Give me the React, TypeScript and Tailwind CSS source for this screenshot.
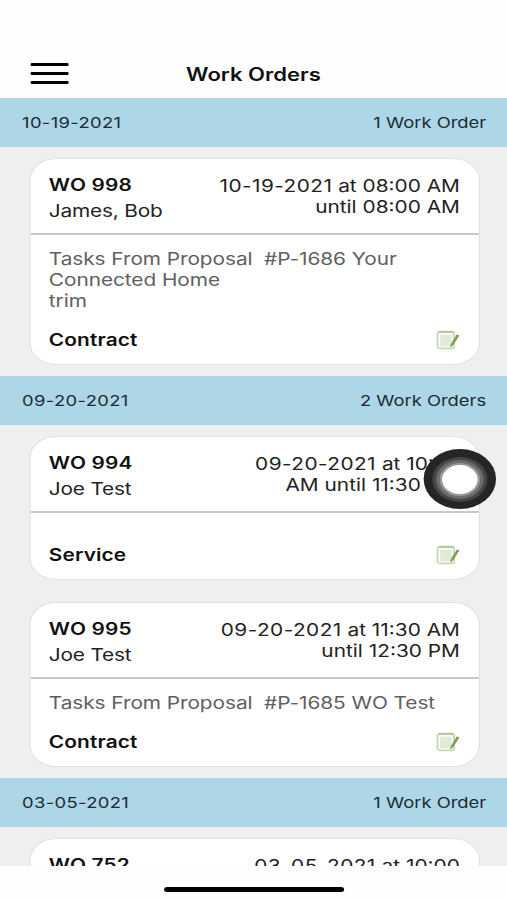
type WorkOrder = {
  id: number;
  customer: string;
  schedule: string[];
  tasks: string[];
  type: string;
};

type Day = {
  date: string;
  count: string;
  orders: WorkOrder[];
};

const days: Day[] = [
  {
    date: '10-19-2021',
    count: '1 Work Order',
    orders: [
      {
        id: 998,
        customer: 'James, Bob',
        schedule: [' at 08:00 AM', 'until 08:00 AM'],
        tasks: ['Tasks From Proposal  #P-1686 Your', 'Connected Home', 'trim'],
        type: 'Contract',
      },
    ],
  },
  {
    date: '09-20-2021',
    count: '2 Work Orders',
    orders: [
      {
        id: 994,
        customer: 'Joe Test',
        schedule: [' at 10:30', 'AM until 11:30 AM'],
        tasks: [],
        type: 'Service',
      },
      {
        id: 995,
        customer: 'Joe Test',
        schedule: [' at 11:30 AM', 'until 12:30 PM'],
        tasks: ['Tasks From Proposal  #P-1685 WO Test'],
        type: 'Contract',
      },
    ],
  },
  {
    date: '03-05-2021',
    count: '1 Work Order',
    orders: [
      {
        id: 752,
        customer: 'Joe Test',
        schedule: [' at 10:00'],
        tasks: [],
        type: '',
      },
    ],
  },
];

function NoteIcon() {
  return (
    <svg className="h-5 w-5" viewBox="0 0 20 20" fill="none">
      <rect x="1.2" y="1.5" width="13.6" height="17" rx="2" fill="#f8fbf4" stroke="#c3d3ad" strokeWidth="1.3" />
      <path d="M2.2 2h11.8" stroke="#a9bf8c" strokeWidth="1.5" />
      <rect x="3.4" y="4.8" width="9.4" height="11.6" fill="#e1ead6" />
      <path d="M12 16.8l.6-2.8L17.2 4.8l1.5.9-4.8 9.1z" fill="#7d9c52" stroke="#7d9c52" strokeWidth=".8" />
    </svg>
  );
}

function WorkOrderCard({ date, order }: { date: string; order: WorkOrder }) {
  const [start, ...rest] = order.schedule;

  return (
    <div className="overflow-hidden rounded-[22px] border border-[#e2e2e2] bg-white">
      <div className="flex h-[76px] justify-between border-b-2 border-[#c8c8c8] pt-[15px] pr-[15px] pl-[15.4px] text-[#222]">
        <div>
          <div className="text-[17px] leading-[22px] font-semibold tracking-[0.15px] text-[#111]">WO {order.id}</div>
          <div className="mt-1 text-[17px] leading-[22px] tracking-[-0.15px]">{order.customer}</div>
        </div>
        <div className="pt-[1.5px] text-right text-[17px] leading-[21px]">
          <div className="whitespace-pre">
            <span className="tracking-[0.35px]">{date}</span>
            {start}
          </div>
          {rest.map((line) => (
            <div key={line}>{line}</div>
          ))}
        </div>
      </div>
      <div className="pt-[13.5px] pr-[15px] pb-[13.5px] pl-[15.4px]">
        <div className="text-[17px] leading-[21px] tracking-[-0.05px] text-[#606060]">
          {order.tasks.map((line) => (
            <div key={line} className="whitespace-pre">{line}</div>
          ))}
        </div>
        <div className="mt-[17px] flex h-[22px] items-center justify-between">
          <span className="text-[17px] leading-[22px] font-semibold tracking-[0.1px] text-[#111]">{order.type}</span>
          <NoteIcon />
        </div>
      </div>
    </div>
  );
}

function DaySection({ day }: { day: Day }) {
  return (
    <section>
      <div className="flex h-[49px] items-center justify-between bg-[#add6e6] pt-[2px] pr-[17px] pl-[18px] text-[15px] text-[#1c2b33]">
        <span className="tracking-[0.3px]">{day.date}</span>
        <span>{day.count}</span>
      </div>
      <div className="flex flex-col gap-[22px] pt-[11px] pr-[22.5px] pb-[11px] pl-[23.5px]">
        {day.orders.map((order) => (
          <WorkOrderCard key={order.id} date={day.date} order={order} />
        ))}
      </div>
    </section>
  );
}

// The 414pt wide phone layout is stretched to fill the 507px frame
export default function App() {
  return (
    <div className="h-[900px] w-[507px] overflow-hidden bg-white">
      <div
        className="relative flex h-[900px] w-[414px] origin-left scale-x-[1.2246] flex-col bg-[#fefefe]"
        style={{ fontFamily: 'Inter, "Liberation Sans", sans-serif' }}
      >
        <header className="grid h-[98px] shrink-0 grid-cols-[1fr_auto_1fr] items-end px-[25px] pb-[12.5px]">
          <div className="flex h-[23px] w-[31px] flex-col gap-[6px]">
            <span className="h-[3px] rounded-[1px] bg-black" />
            <span className="h-[3px] rounded-[1px] bg-black" />
            <span className="h-[3px] rounded-[1px] bg-black" />
          </div>
          <h1 className="text-[18px] leading-[22px] font-semibold text-[#111]">Work Orders</h1>
        </header>

        <main className="h-[768px] shrink-0 overflow-hidden bg-[#efefef]">
          {days.map((day) => (
            <DaySection key={day.date} day={day} />
          ))}
        </main>

        <footer className="flex flex-1 items-end justify-center pb-[8px]">
          <div className="h-[5px] w-[147px] rounded-full bg-black" />
        </footer>

        {/* Touch marker */}
        <div className="absolute top-[449px] left-[345.5px] flex h-[60px] w-[59px] items-center justify-center rounded-full bg-[#252525]">
          <div className="flex h-[45px] w-[45px] items-center justify-center rounded-full bg-[#454545]">
            <div className="flex h-[39px] w-[39px] items-center justify-center rounded-full bg-[#6c6c6c]">
              <div className="h-[33px] w-[33px] rounded-full border-[2.5px] border-[#999] bg-white" />
            </div>
          </div>
        </div>
      </div>
    </div>
  );
}
